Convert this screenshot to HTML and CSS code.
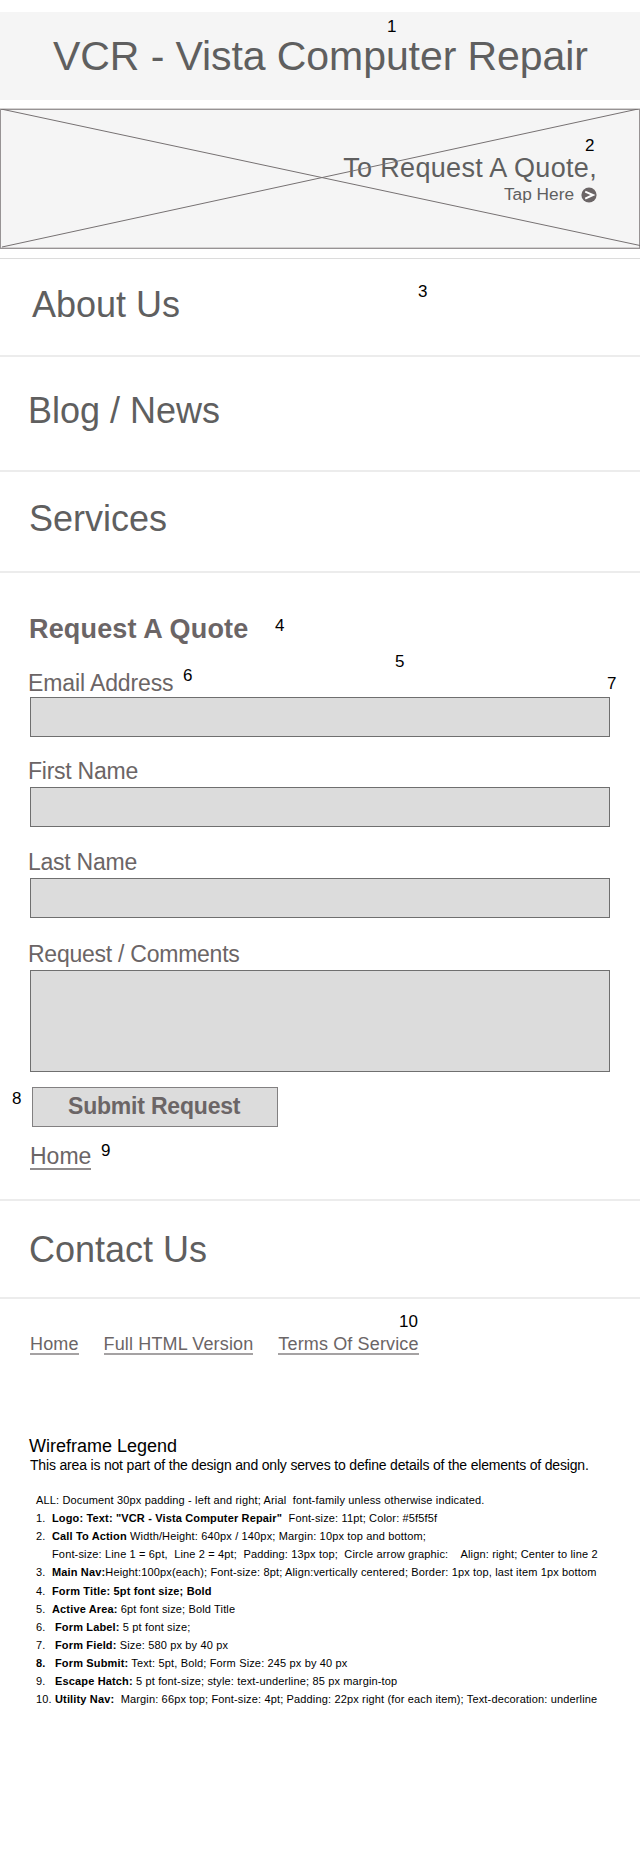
FILE: index.html
```html
<!DOCTYPE html>
<html lang="en">
<head>
<meta charset="utf-8">
<title>VCR - Vista Computer Repair</title>
<link rel="stylesheet" href="styles.css">
</head>
<body>
<div class="page">
  <header class="masthead"><h1 class="logo">VCR - Vista Computer Repair</h1></header>
  <a class="banner">
    <svg class="banner-cross" viewBox="0 0 640 140" fill="none" stroke="#767172" stroke-width="1"><path d="M1 0L640 136.5M2 138L638 0"/></svg>
    <span class="banner-title">To Request A Quote,</span>
    <span class="banner-action">Tap Here
      <svg class="arrow" viewBox="0 0 16 16"><circle cx="8" cy="8" r="7.6" fill="#6b6566"/><path d="M4.2 4.7L12 8L4.2 11.6" fill="none" stroke="#fff" stroke-width="2"/></svg>
    </span>
  </a>
  <nav class="menu">
    <a class="menu-item about">About Us</a>
    <a class="menu-item blog">Blog / News</a>
    <a class="menu-item services">Services</a>
  </nav>
  <form class="quote-form">
    <h2 class="form-title">Request A Quote</h2>
    <label class="label email">Email Address</label><div class="field close"></div>
    <label class="label first">First Name</label><div class="field"></div>
    <label class="label last">Last Name</label><div class="field"></div>
    <label class="label comments">Request / Comments</label><div class="field area"></div>
    <div class="submit">Submit Request</div>
    <a class="home">Home</a>
  </form>
  <a class="menu-item contact">Contact Us</a>
  <footer class="utility"><a>Home</a><a>Full HTML Version</a><a>Terms Of Service</a></footer>
  <section class="legend">
    <h3 class="legend-title">Wireframe Legend</h3>
    <p class="legend-intro">This area is not part of the design and only serves to define details of the elements of design.</p>
    <div class="notes">
      <p class="note n0">ALL: Document 30px padding - left and right; Arial&nbsp; font-family unless otherwise indicated.</p>
      <p class="note n1"><i>1.</i><span><b>Logo: Text: "VCR - Vista Computer Repair"</b>&nbsp; Font-size: 11pt; Color: #5f5f5f</span></p>
      <p class="note n2"><i>2.</i><span><b>Call To Action</b> Width/Height: 640px / 140px; Margin: 10px top and bottom;</span></p>
      <p class="note n2b"><i></i><span>Font-size: Line 1 = 6pt,&nbsp; Line 2 = 4pt;&nbsp; Padding: 13px top;&nbsp; Circle arrow graphic:&nbsp;&nbsp;&nbsp; Align: right; Center to line 2</span></p>
      <p class="note n3"><i>3.</i><span><b>Main Nav:</b>Height:100px(each); Font-size: 8pt; Align:vertically centered; Border: 1px top, last item 1px bottom</span></p>
      <p class="note n4"><i>4.</i><span><b>Form Title: 5pt font size; Bold</b></span></p>
      <p class="note n5"><i>5.</i><span><b>Active Area:</b> 6pt font size; Bold Title</span></p>
      <p class="note wide"><i>6.</i><span><b>Form Label:</b> 5 pt font size;</span></p>
      <p class="note wide"><i>7.</i><span><b>Form Field:</b> Size: 580 px by 40 px</span></p>
      <p class="note wide"><i><b>8.</b></i><span><b>Form Submit:</b> Text: 5pt, Bold; Form Size: 245 px by 40 px</span></p>
      <p class="note wide"><i>9.</i><span><b>Escape Hatch:</b> 5 pt font-size; style: text-underline; 85 px margin-top</span></p>
      <p class="note wide"><i>10.</i><span><b>Utility Nav:</b>&nbsp; Margin: 66px top; Font-size: 4pt; Padding: 22px right (for each item); Text-decoration: underline</span></p>
    </div>
  </section>
  <span class="pin p1">1</span><span class="pin p2">2</span><span class="pin p3">3</span><span class="pin p4">4</span><span class="pin p5">5</span>
  <span class="pin p6">6</span><span class="pin p7">7</span><span class="pin p8">8</span><span class="pin p9">9</span><span class="pin p10">10</span>
</div>
</body>
</html>
```

FILE: styles.css
```css
* { box-sizing: border-box; margin: 0; padding: 0; }
body { background: #fff; font-family: "Liberation Sans", Arial, sans-serif; color: #5f5f5f; }
.page { position: relative; width: 640px; height: 1850px; padding-top: 12px; overflow: hidden; white-space: nowrap; }
.masthead { height: 88px; padding: 21px 0 0 53px; background: #f5f5f5; }
.logo { font-size: 41px; line-height: 46px; font-weight: 400; letter-spacing: -0.08px; }
.banner { position: relative; display: flex; flex-direction: column; align-items: flex-end; height: 140px; margin-top: 9px; padding: 43px 42px 0 0; background: #f5f5f5; border: 1px solid #979394; box-shadow: 0 -1px #d3d1d1, inset 0 -1px #d3d1d1; }
.banner-cross { position: absolute; left: -1px; top: -1px; width: 640px; height: 140px; }
.banner-title { font-size: 27px; line-height: 30px; letter-spacing: 0.32px; }
.banner-action { display: flex; align-items: center; gap: 7px; margin-top: 2px; font-size: 17.3px; line-height: 19px; }
.arrow { width: 16px; height: 16px; }
.menu { margin-top: 9px; }
.menu-item { display: block; font-size: 36px; line-height: 41px; }
.about { height: 97px; padding: 25px 0 0 32px; border-top: 1px solid #dcdcdc; }
.blog { height: 115px; padding: 33px 0 0 28px; border-top: 2px solid #ececec; }
.services { height: 101px; padding: 26px 0 0 29px; border-top: 2px solid #ececec; }
.quote-form { height: 628px; padding: 41px 30px 0; border-top: 2px solid #ececec; color: #6b6566; }
.form-title { margin-left: -1px; font-size: 27px; line-height: 30px; letter-spacing: 0.16px; }
.label { display: block; margin-left: -2px; font-size: 23px; line-height: 26px; letter-spacing: -0.25px; }
.email { margin-top: 26px; letter-spacing: -0.12px; }
.first { margin-top: 21px; }
.last { margin-top: 22px; }
.comments { margin-top: 23px; }
.field { height: 40px; margin-top: 3px; background: #dcdcdc; border: 1px solid #6f6f6f; }
.close { margin-top: 1px; }
.area { height: 102px; }
.submit { width: 246px; height: 40px; margin: 15px 0 0 2px; padding: 5px 0 0 35px; background: #dcdcdc; border: 1px solid #828081; font-size: 23px; line-height: 26px; font-weight: 700; letter-spacing: -0.2px; }
.home { display: inline-block; height: 26px; margin-top: 17px; font-size: 23px; line-height: 25px; border-bottom: 2px solid #8f8b8c; }
.contact { height: 98px; padding: 28px 0 0 29px; border-top: 2px solid #ececec; }
.utility { display: flex; gap: 25px; height: 102px; padding: 36px 0 0 30px; border-top: 2px solid #ececec; color: #6b6566; font-size: 18px; line-height: 19px; letter-spacing: 0.14px; }
.utility a { height: 20px; border-bottom: 2px solid #a5a2a3; }
.legend { padding: 37px 0 0 30px; color: #000; }
.legend-title { font-size: 18px; line-height: 20px; font-weight: 400; margin-left: -1px; }
.legend-intro { font-size: 14px; line-height: 16px; margin-top: 1px; letter-spacing: -0.18px; }
.notes { padding: 21px 0 0 6px; font-size: 11px; letter-spacing: 0.15px; }
.note { display: flex; height: 18px; line-height: 12px; }
.note i { width: 16px; font-style: normal; }
.wide i { width: 19px; }
.n3 { height: 19px; }
.pin { position: absolute; color: #000; font-size: 17px; line-height: 19px; }
.p1 { left: 387px; top: 17px; }
.p2 { left: 585px; top: 136px; }
.p3 { left: 418px; top: 282px; }
.p4 { left: 275px; top: 616px; }
.p5 { left: 395px; top: 652px; }
.p6 { left: 183px; top: 666px; }
.p7 { left: 607px; top: 674px; }
.p8 { left: 12px; top: 1089px; }
.p9 { left: 101px; top: 1141px; }
.p10 { left: 399px; top: 1312px; }
```
